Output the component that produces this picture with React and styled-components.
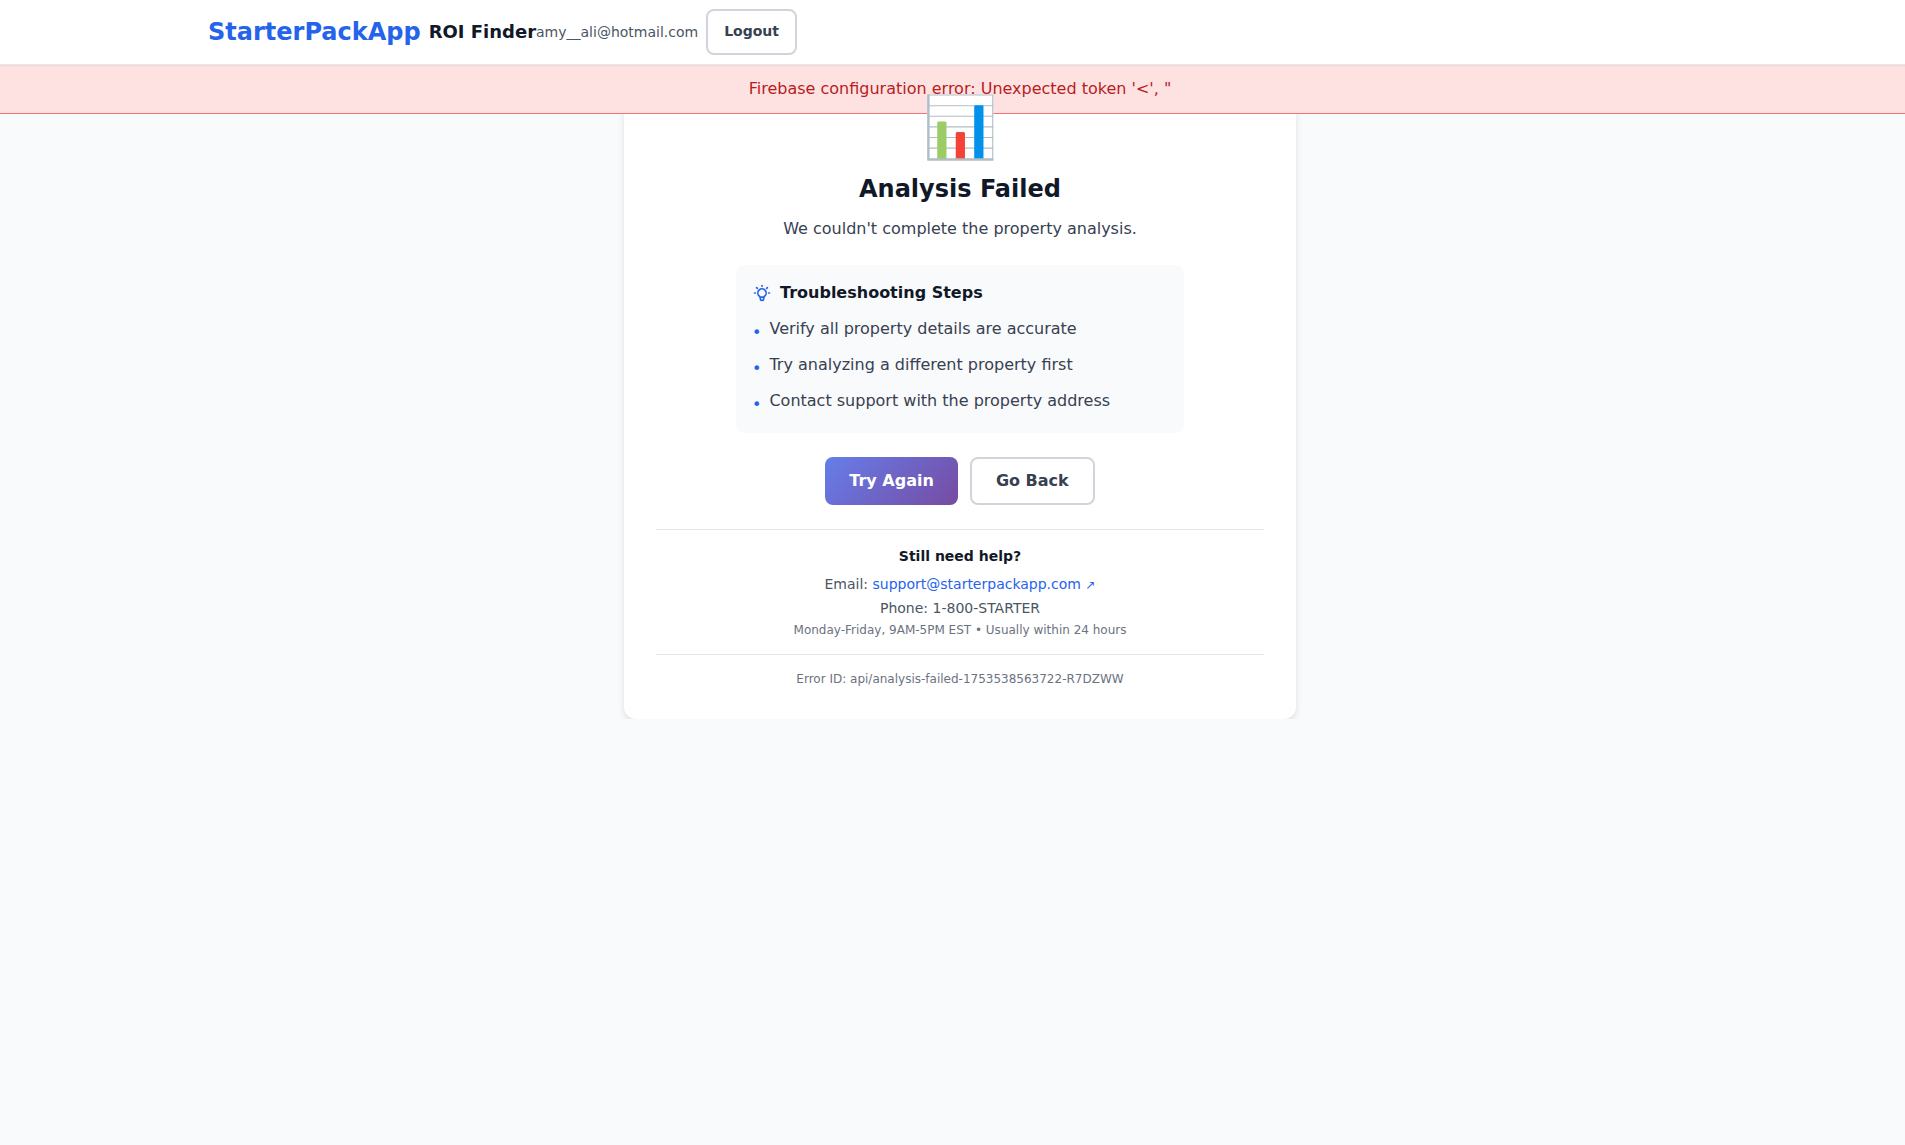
import React from 'react';
import styled, { createGlobalStyle, css } from 'styled-components';

const GlobalStyle = createGlobalStyle`
  *, *::before, *::after { box-sizing: border-box; }
  html { overflow-x: hidden; }
  body {
    margin: 0;
    background: #f9fafb;
    color: #111827;
    font-family: "DejaVu Sans", sans-serif;
    font-size: 16px;
    line-height: 24px;
    overflow-x: hidden;
  }
  h1, h2, h3, p, ul { margin: 0; padding: 0; }
`;

const Page = styled.div`
  width: calc(100% + 15px);
`;

const Header = styled.header`
  position: relative;
  z-index: 3;
  background: #fff;
  border-bottom: 1px solid #e5e7eb;
  box-shadow: 0 1px 2px rgba(0, 0, 0, 0.05);
`;

const HeaderInner = styled.div`
  display: flex;
  align-items: center;
  max-width: 1536px;
  min-height: 64px;
  margin: 0 auto;
  padding: 0 16px;
`;

const Brand = styled.div`
  display: flex;
  align-items: center;
  gap: 8px;
`;

const Logo = styled.a`
  color: #2563eb;
  font-size: 24px;
  font-weight: 700;
  line-height: 32px;
  text-decoration: none;
`;

const Product = styled.span`
  font-size: 18px;
  font-weight: 600;
  line-height: 28px;
`;

const Account = styled.div`
  display: flex;
  align-items: center;
  gap: 8px;
  color: #4b5563;
  font-size: 14px;
  line-height: 20px;
`;

const Button = styled.button`
  border: 0;
  border-radius: 8px;
  padding: 12px 24px;
  color: #fff;
  background: linear-gradient(135deg, #667eea 0%, #764ba2 100%);
  font-family: inherit;
  font-size: 16px;
  font-weight: 600;
  line-height: 24px;
  cursor: pointer;

  ${(p) => p.$outline && css`
    border: 2px solid #d1d5db;
    padding: 10px 24px;
    color: #374151;
    background: #fff;
  `}

  ${(p) => p.$compact && css`
    padding: 10px 16px 12px;
    font-size: 14px;
    line-height: 20px;
  `}
`;

const Content = styled.div`
  position: relative;
`;

const Banner = styled.div`
  position: absolute;
  inset: 0 0 auto;
  z-index: 1;
  padding: 12px;
  border-bottom: 1px solid #f87171;
  color: #b91c1c;
  background: #fee2e2;
  text-align: center;
`;

const Main = styled.main`
  display: flex;
  justify-content: center;
  overflow: hidden;
`;

const Card = styled.section`
  width: 100%;
  max-width: 672px;
  padding: 32px;
  border-radius: 12px;
  background: #fff;
  box-shadow: 0 4px 6px rgba(0, 0, 0, 0.1);
  text-align: center;
`;

const Emoji = styled.div`
  position: relative;
  z-index: 2;
  margin-bottom: 16px;
  font-size: 60px;
  line-height: 60px;
`;

const Title = styled.h1`
  margin-bottom: 12px;
  font-size: 24px;
  font-weight: 700;
  line-height: 32px;
`;

const Message = styled.p`
  margin-bottom: 24px;
  color: #374151;
`;

const Tips = styled.div`
  max-width: 448px;
  margin: 0 auto 24px;
  padding: 16px;
  border-radius: 8px;
  background: #f9fafb;
  text-align: left;
`;

const TipsTitle = styled.h2`
  display: flex;
  align-items: center;
  gap: 8px;
  margin-bottom: 12px;
  font-size: 16px;
  font-weight: 600;
  line-height: 24px;

  svg { color: #2563eb; }
`;

const TipList = styled.ul`
  display: grid;
  gap: 8px;
  list-style: none;
`;

const Tip = styled.li`
  display: flex;
  align-items: flex-start;
  gap: 8px;
  color: #374151;
`;

const Bullet = styled.span`
  margin-top: 4px;
  color: #2563eb;
`;

const Actions = styled.div`
  display: flex;
  justify-content: center;
  gap: 12px;
  margin-bottom: 24px;
`;

const Footer = styled.div`
  display: grid;
  gap: 4px;
  padding: 16px 0;
  border-top: 1px solid #e5e7eb;
  color: #4b5563;
  font-size: 14px;
  line-height: 20px;
`;

const FooterTitle = styled.h3`
  margin-bottom: 4px;
  color: #111827;
  font-size: 14px;
  font-weight: 600;
  line-height: 20px;
`;

const Link = styled.a`
  color: #2563eb;
  text-decoration: none;
`;

const Arrow = styled.span`
  font-size: 12px;
  line-height: 16px;
`;

const Small = styled.p`
  color: #6b7280;
  font-size: 12px;
  line-height: 16px;
`;

const ErrorId = styled(Small)`
  padding-top: 16px;
  border-top: 1px solid #e5e7eb;
`;

function BulbIcon() {
  return (
    <svg width="20" height="20" viewBox="0 0 24 24" fill="none" stroke="currentColor" strokeWidth="2" strokeLinecap="round" strokeLinejoin="round" aria-hidden="true">
      <path d="M9.663 17h4.673M12 3v1m6.364 1.636l-.707.707M21 12h-1M4 12H3m3.343-5.657l-.707-.707m2.828 9.9a5 5 0 117.072 0l-.548.547A3.374 3.374 0 0014 18.469V19a2 2 0 11-4 0v-.531c0-.895-.356-1.754-.988-2.386l-.548-.547z" />
    </svg>
  );
}

const tips = [
  'Verify all property details are accurate',
  'Try analyzing a different property first',
  'Contact support with the property address',
];

export default function App() {
  return (
    <>
      <GlobalStyle />
      <Page>
        <Header>
          <HeaderInner>
            <Brand>
              <Logo href="#">StarterPackApp</Logo>
              <Product>ROI Finder</Product>
            </Brand>
            <Account>
              <span>amy__ali@hotmail.com</span>
              <Button type="button" $outline $compact>Logout</Button>
            </Account>
          </HeaderInner>
        </Header>
        <Content>
          <Banner role="alert">{`Firebase configuration error: Unexpected token '<', "`}</Banner>
          <Main>
            <Card>
              <Emoji>📊</Emoji>
              <Title>Analysis Failed</Title>
              <Message>We couldn't complete the property analysis.</Message>
              <Tips>
                <TipsTitle><BulbIcon />Troubleshooting Steps</TipsTitle>
                <TipList>
                  {tips.map((tip) => (
                    <Tip key={tip}><Bullet>•</Bullet><span>{tip}</span></Tip>
                  ))}
                </TipList>
              </Tips>
              <Actions>
                <Button type="button">Try Again</Button>
                <Button type="button" $outline>Go Back</Button>
              </Actions>
              <Footer>
                <FooterTitle>Still need help?</FooterTitle>
                <p>Email: <Link href="mailto:support@starterpackapp.com">support@starterpackapp.com <Arrow>↗</Arrow></Link></p>
                <p>Phone: 1-800-STARTER</p>
                <Small>Monday-Friday, 9AM-5PM EST • Usually within 24 hours</Small>
              </Footer>
              <ErrorId>Error ID: api/analysis-failed-1753538563722-R7DZWW</ErrorId>
            </Card>
          </Main>
        </Content>
      </Page>
    </>
  );
}
